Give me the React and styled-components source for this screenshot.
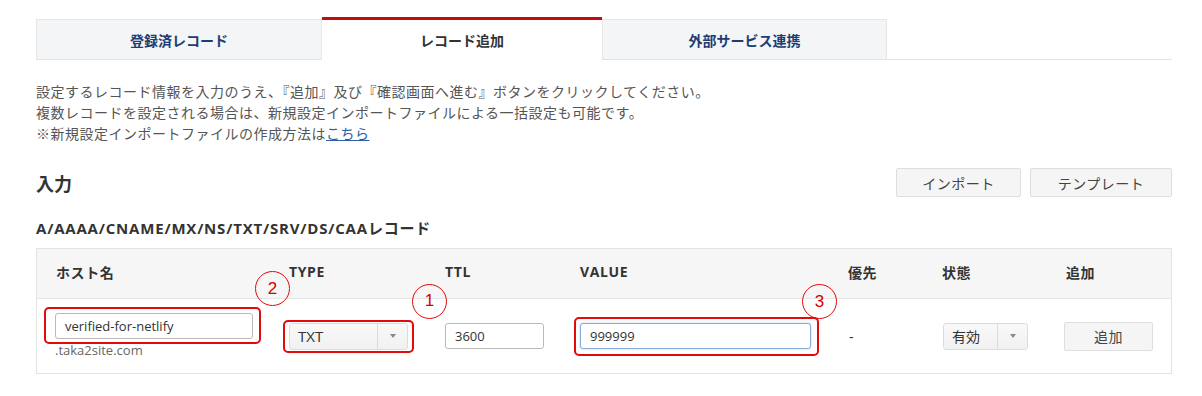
import React from "react";
import styled, { createGlobalStyle } from "styled-components";

const GlobalStyle = createGlobalStyle`
    body {
        margin : 0;
        background : #fff;
        font-family : "Open Sans", "Noto Sans CJK JP", sans-serif;
        color : #333;
    }
`

const Page = styled.div`
    width : 1136px;
    padding : 17px 30px 0 36px;
`

const TabBar = styled.div`
    display : flex;
    align-items : flex-end;
    height : 42px;
    border-bottom : 1px solid #e3e3e3;
`

const Tab = styled.div`
    box-sizing : border-box;
    width : ${(p) => p.$w}px;
    height : ${(p) => (p.$active ? 43 : 40)}px;
    margin-bottom : ${(p) => (p.$active ? -1 : 0)}px;
    display : flex;
    align-items : center;
    justify-content : center;
    font-size : 14px;
    font-weight : bold;
    color : ${(p) => (p.$active ? "#333" : "#1e3d72")};
    background : ${(p) => (p.$active ? "#fff" : "#f4f5f7")};
    border : 1px solid #e6e6e6;
    border-bottom : none;
    border-top : ${(p) => (p.$active ? "3px solid #c30d0d" : "1px solid #e6e6e6")};
    ${(p) => p.$active && "border-left : none; border-right : none;"}
`

const Desc = styled.div`
    margin-top : 21px;
    font-size : 14px;
    line-height : 21px;
    letter-spacing : 0.5px;
    color : #555;
    & a {
        color : #2b5ea7;
        text-decoration : underline;
    }
`

const ActionRow = styled.div`
    margin-top : 24px;
    display : flex;
    align-items : center;
    justify-content : space-between;
    height : 29px;
`

const SectionTitle = styled.div`
    font-size : 18px;
    font-weight : bold;
    color : #333;
`

const ButtonGroup = styled.div`
    display : flex;
    gap : 9px;
`

const GrayButton = styled.button`
    box-sizing : border-box;
    width : ${(p) => p.$w}px;
    height : ${(p) => p.$h || 29}px;
    background : #f5f5f5;
    border : 1px solid #dedede;
    border-radius : 2px;
    font-family : inherit;
    font-size : 14px;
    letter-spacing : 0.5px;
    color : #444;
    padding : 0;
`

const RecordTitle = styled.div`
    margin-top : 21px;
    margin-bottom : 10px;
    font-size : 15px;
    line-height : 20px;
    font-weight : bold;
    letter-spacing : 0.8px;
    color : #333;
`

const Table = styled.div`
    border : 1px solid #e3e3e3;
`

const Row = styled.div`
    display : grid;
    grid-template-columns : 233px 156px 135px 268px 94px 124px 105px;
    padding-left : 19px;
    align-items : center;
    height : ${(p) => p.$h}px;
    background : ${(p) => p.$bg || "#fff"};
    border-bottom : ${(p) => (p.$line ? "1px solid #e6e6e6" : "none")};
`

const HeadCell = styled.div`
    font-size : 14px;
    font-weight : bold;
    letter-spacing : 0.6px;
    color : #333;
    margin-top : -4px;
`

const Cell = styled.div`
    display : flex;
    flex-direction : column;
    align-items : flex-start;
    margin-left : ${(p) => p.$ml || 0}px;
`

const TextInput = styled.div`
    box-sizing : border-box;
    width : ${(p) => p.$w}px;
    height : 26px;
    border : 1px solid ${(p) => (p.$focus ? "#86addf" : "#b9b9b9")};
    box-shadow : ${(p) => (p.$focus ? "0 0 2px #a9c6ee" : "none")};
    border-radius : 3px;
    padding : 0 9px;
    display : flex;
    align-items : center;
    font-size : 13px;
    color : #333;
    background : #fff;
`

const SubText = styled.div`
    margin-top : 2px;
    font-size : 13px;
    line-height : 18px;
    color : #666;
`

const Select = styled.div`
    box-sizing : border-box;
    width : ${(p) => p.$w}px;
    height : 27px;
    display : flex;
    border : 1px solid #dcdcdc;
    border-radius : 3px;
    background : linear-gradient(#f9f9f9, #f1f1f1);
    font-size : ${(p) => p.$fs || 14}px;
    color : #333;
`

const SelectLabel = styled.div`
    flex : 1;
    display : flex;
    align-items : center;
    padding-left : 8px;
`

const SelectArrow = styled.div`
    width : ${(p) => p.$w}px;
    border-left : 1px solid #dcdcdc;
    display : flex;
    align-items : center;
    justify-content : center;
    &::after {
        content : "";
        border-left : 3px solid transparent;
        border-right : 3px solid transparent;
        border-top : 4px solid #888;
    }
`

const Dash = styled.div`
    font-size : 14px;
    color : #333;
    padding-left : 1px;
`

const Marked = styled.div`
    position : relative;
`

const Ring = styled.div`
    position : absolute;
    top : ${(p) => p.$t}px;
    left : ${(p) => p.$l}px;
    right : ${(p) => p.$r}px;
    bottom : ${(p) => p.$b}px;
    border : 2px solid #e20a0a;
    border-radius : 5px;
    pointer-events : none;
`

const Badge = styled.div`
    position : absolute;
    top : ${(p) => p.$t}px;
    left : ${(p) => p.$l}px;
    box-sizing : border-box;
    width : 35px;
    height : 35px;
    border : 1.5px solid #e20a0a;
    border-radius : 50%;
    display : flex;
    align-items : center;
    justify-content : center;
    font-family : "Liberation Sans", Arial, sans-serif;
    font-size : 17px;
    color : #d40000;
`

const headers = ["ホスト名", "TYPE", "TTL", "VALUE", "優先", "状態", "追加"]

const App = () => {
    return (
        <Page>
            <GlobalStyle />
            <TabBar>
                <Tab $w={286}>登録済レコード</Tab>
                <Tab $w={280} $active>レコード追加</Tab>
                <Tab $w={285}>外部サービス連携</Tab>
            </TabBar>

            <Desc>
                設定するレコード情報を入力のうえ、『追加』及び『確認画面へ進む』ボタンをクリックしてください。<br />
                複数レコードを設定される場合は、新規設定インポートファイルによる一括設定も可能です。<br />
                ※新規設定インポートファイルの作成方法は<a href="#">こちら</a>
            </Desc>

            <ActionRow>
                <SectionTitle>入力</SectionTitle>
                <ButtonGroup>
                    <GrayButton $w={125}>インポート</GrayButton>
                    <GrayButton $w={142}>テンプレート</GrayButton>
                </ButtonGroup>
            </ActionRow>

            <RecordTitle>A/AAAA/CNAME/MX/NS/TXT/SRV/DS/CAAレコード</RecordTitle>

            <Table>
                <Row $h={49} $bg="#f6f6f6" $line>
                    {headers.map((h) => (
                        <HeadCell key={h}>{h}</HeadCell>
                    ))}
                </Row>
                <Row $h={74}>
                    <Cell $ml={-1}>
                        <Marked>
                            <TextInput $w={198}>verified-for-netlify</TextInput>
                            <Ring $t={-6} $l={-11} $r={-8} $b={-5} />
                            <Badge $t={-42} $l={200}>2</Badge>
                        </Marked>
                        <SubText>.taka2site.com</SubText>
                    </Cell>
                    <Cell>
                        <Marked>
                            <Select $w={119} $fs={15}>
                                <SelectLabel>TXT</SelectLabel>
                                <SelectArrow $w={29} />
                            </Select>
                            <Ring $t={-3} $l={-6} $r={-6} $b={-3} />
                            <Badge $t={-39} $l={123}>1</Badge>
                        </Marked>
                    </Cell>
                    <Cell>
                        <TextInput $w={99}>3600</TextInput>
                    </Cell>
                    <Cell>
                        <Marked>
                            <TextInput $w={231} $focus>999999</TextInput>
                            <Ring $t={-6} $l={-6} $r={-8} $b={-7} />
                            <Badge $t={-39} $l={222}>3</Badge>
                        </Marked>
                    </Cell>
                    <Cell>
                        <Dash>-</Dash>
                    </Cell>
                    <Cell $ml={1}>
                        <Select $w={85}>
                            <SelectLabel>有効</SelectLabel>
                            <SelectArrow $w={29} />
                        </Select>
                    </Cell>
                    <Cell $ml={-2}>
                        <GrayButton $w={89}>追加</GrayButton>
                    </Cell>
                </Row>
            </Table>
        </Page>
    )
}

export default App;
